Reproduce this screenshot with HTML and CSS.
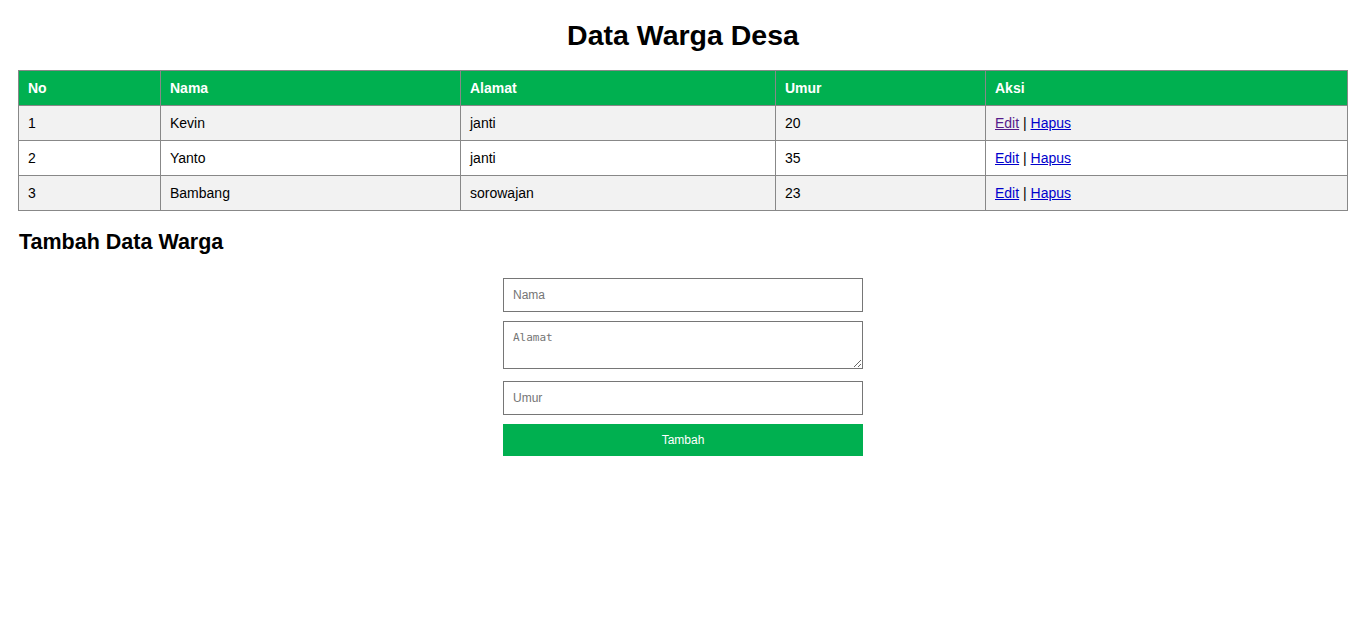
FILE: index.html
```html
<!DOCTYPE html>
<html lang="id">
<head>
<meta charset="utf-8">
<title>Data Warga Desa</title>
<link rel="stylesheet" href="styles.css">
</head>
<body>
<h1 class="title">Data Warga Desa</h1>
<table class="data">
  <thead>
    <tr>
      <th class="c-no">No</th>
      <th class="c-nama">Nama</th>
      <th class="c-alamat">Alamat</th>
      <th class="c-umur">Umur</th>
      <th class="c-aksi">Aksi</th>
    </tr>
  </thead>
  <tbody>
    <tr><td>1</td><td>Kevin</td><td>janti</td><td>20</td><td><a href="#" class="visited">Edit</a> | <a href="#">Hapus</a></td></tr>
    <tr><td>2</td><td>Yanto</td><td>janti</td><td>35</td><td><a href="#">Edit</a> | <a href="#">Hapus</a></td></tr>
    <tr><td>3</td><td>Bambang</td><td>sorowajan</td><td>23</td><td><a href="#">Edit</a> | <a href="#">Hapus</a></td></tr>
  </tbody>
</table>
<h2 class="subtitle">Tambah Data Warga</h2>
<form class="form">
  <input class="field f-nama" type="text" placeholder="Nama">
  <textarea class="field f-alamat" rows="2" placeholder="Alamat"></textarea>
  <input class="field f-umur" type="text" placeholder="Umur">
  <button class="btn" type="button">Tambah</button>
</form>
</body>
</html>
```
FILE: styles.css
```css
html, body {
  margin: 0;
  padding: 0;
  background: #fff;
}
body {
  padding: 0 18px;
  font-family: "Liberation Sans", Arial, sans-serif;
  font-size: 14px;
  color: #000;
}
.title {
  font-size: 28.5px;
  font-weight: bold;
  text-align: center;
  margin: 0;
  padding-top: 19px;
  height: 70px;
  box-sizing: border-box;
  line-height: 32px;
}
.data {
  width: 100%;
  border-collapse: collapse;
  table-layout: fixed;
}
.data th, .data td {
  border: 1px solid #888;
  padding: 9px 9px;
  text-align: left;
  line-height: 16px;
  font-size: 14px;
}
.data th {
  background: #00b050;
  color: #fff;
  font-weight: bold;
}
.data tbody tr:nth-child(odd) td {
  background: #f2f2f2;
}
.data tbody tr:nth-child(even) td {
  background: #fff;
}
.c-no { width: 123px; }
.c-nama { width: 281px; }
.c-alamat { width: 296px; }
.c-umur { width: 191px; }
.data a { color: #0000cc; text-decoration: underline; }
.data a.visited { color: #551a8b; }
.subtitle {
  font-size: 21.5px;
  font-weight: bold;
  margin: 0;
  padding-top: 19px;
  line-height: 24px;
  padding-left: 1px;
}
.form {
  width: 360px;
  margin: 24px auto 0;
  display: flex;
  flex-direction: column;
}
.field {
  box-sizing: border-box;
  width: 360px;
  border: 1px solid #767676;
  padding: 8px 9px;
  margin: 0;
  font-size: 12px;
  color: #000;
  background: #fff;
}
.f-nama, .f-umur {
  height: 34px;
  font-family: "Liberation Sans", Arial, sans-serif;
}
.f-alamat {
  height: 48px;
  margin-top: 9px;
  font-family: "DejaVu Sans Mono", "Liberation Mono", monospace;
  font-size: 11px;
  line-height: 15px;
  resize: both;
}
.f-umur { margin-top: 12px; }
.field::placeholder { color: #757575; }
.btn {
  margin-top: 9px;
  height: 32px;
  width: 360px;
  border: 0;
  background: #00b050;
  color: #fff;
  font-family: "Liberation Sans", Arial, sans-serif;
  font-size: 12px;
  cursor: pointer;
}
```
